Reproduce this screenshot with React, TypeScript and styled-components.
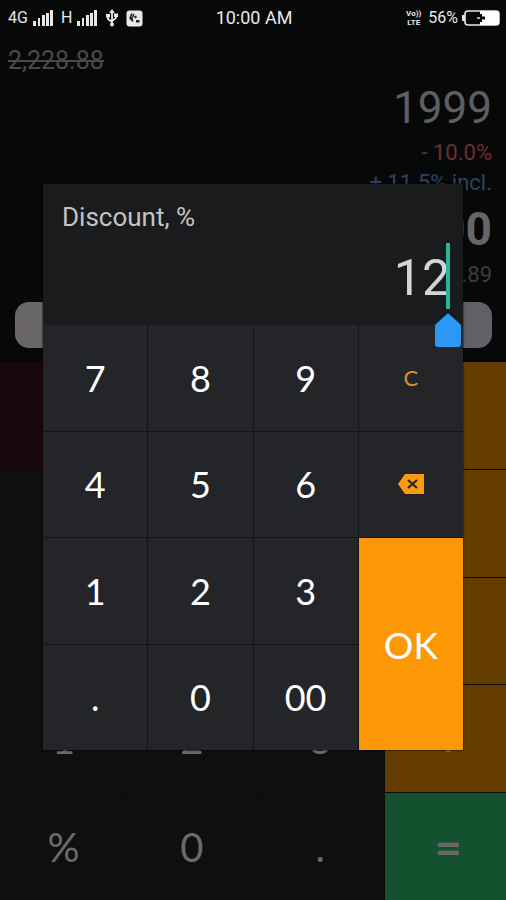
import React, { useState } from "react";
import styled, { createGlobalStyle, css } from "styled-components";

const GlobalStyle = createGlobalStyle`
  *, *::before, *::after { box-sizing: border-box; }
  body { margin: 0; background: #070909; }
  button { font: inherit; border: 0; padding: 0; margin: 0; cursor: pointer; }
`;

const Screen = styled.main`
  position: relative;
  display: flex;
  flex-direction: column;
  min-height: 100vh;
  overflow: hidden;
  background: #070909;
  color: #5e5e5e;
  font-family: Roboto, "Liberation Sans", sans-serif;
`;

const StatusBar = styled.header`
  display: grid;
  grid-template-columns: 1fr auto 1fr;
  align-items: center;
  height: 36px;
  padding: 0 6px 0 8px;
  color: #e8e8e8;
  font-size: 18px;
  line-height: 20px;
`;

const StatusGroup = styled.div<{ $end?: boolean }>`
  display: flex;
  align-items: center;
  justify-content: ${(p) => (p.$end ? "flex-end" : "flex-start")};
  gap: 7px;
  font-size: 16px;
  svg { display: block; flex: none; }
`;

const StatusPair = styled.span`
  display: flex;
  align-items: center;
  gap: 4px;
`;

const Display = styled.section`
  display: flex;
  flex-direction: column;
  align-items: flex-end;
  padding: 8px 14px 0 8px;
`;

const Previous = styled.s`
  align-self: flex-start;
  color: #484a4a;
  font-size: 25px;
  line-height: 34px;
`;

const Line = styled.div<{ $size: number; $height: number; $color: string; $bold?: boolean }>`
  color: ${(p) => p.$color};
  font-size: ${(p) => p.$size}px;
  line-height: ${(p) => p.$height}px;
  font-weight: ${(p) => (p.$bold ? 700 : 400)};
`;

const Banner = styled.div`
  height: 46px;
  margin: 12px 14px 14px 15px;
  border-radius: 14px;
  background: linear-gradient(90deg, #6a6766, #606167);
`;

const Pad = styled.div`
  flex: 1;
  display: grid;
  grid-template-columns: repeat(4, 1fr);
  grid-template-rows: repeat(5, 1fr);
  gap: 1px;
  margin-right: -6px;
  background: #0a0b0c;
  font-family: Lato, sans-serif;
  font-size: 40px;
`;

const tones = {
  plain: "#0e0f11",
  clear: "#19070b",
  operator: "#663d00",
  equals: "#14522f",
};

const PadKey = styled.button<{ $tone: keyof typeof tones }>`
  background: ${(p) => tones[p.$tone]};
  color: #6a6a6b;
  ${(p) => (p.$tone === "equals" || p.$tone === "operator") && css`
    font-size: 46px;
    line-height: 46px;
    font-weight: 700;
  `}
`;

const Overlay = styled.div`
  position: absolute;
  inset: 34px 0 0;
  display: flex;
  align-items: center;
  justify-content: center;
`;

const Dialog = styled.section`
  width: 83%;
  background: #1a1b1c;
  box-shadow: 0 0 2px #000;
`;

const Field = styled.div`
  display: flex;
  flex-direction: column;
  height: 141px;
  padding: 17px 13px 0 19px;
  color: #c4c4c5;
`;

const FieldLabel = styled.label`
  font-size: 26px;
  line-height: 32px;
`;

const Entry = styled.div`
  position: relative;
  margin-top: 10px;
`;

const EntryInput = styled.input`
  display: block;
  width: 100%;
  height: 70px;
  padding: 0;
  border: 0;
  outline: 0;
  background: transparent;
  color: #d4d4d4;
  font: 50px Roboto, sans-serif;
  text-align: right;
  caret-color: transparent;
`;

const Caret = styled.span`
  position: absolute;
  top: 0;
  right: 0;
  width: 4px;
  height: 66px;
  background: #20b99b;
`;

const Handle = styled.svg`
  position: absolute;
  top: 70px;
  right: -12px;
  z-index: 1;
`;

const Keys = styled.div`
  display: grid;
  grid-template-columns: repeat(4, 1fr);
  grid-template-rows: repeat(4, 1fr);
  gap: 1px;
  height: 425px;
  background: #131416;
  font-family: Lato, sans-serif;
`;

const Key = styled.button<{ $kind?: "small" | "ok" }>`
  display: grid;
  place-items: center;
  background: #242529;
  color: #fff;
  font-size: 36px;
  ${(p) => p.$kind === "small" && css`
    color: #d8902c;
    font-size: 22px;
  `}
  ${(p) => p.$kind === "ok" && css`
    grid-area: 3 / 4 / span 2 / auto;
    background: #fc9706;
    font-size: 37px;
  `}
`;

const Signal = () => (
  <svg width="22" height="18" viewBox="0 0 22 18" fill="#e8e8e8" aria-hidden="true">
    <path d="M1 12h3v5H1zM6 9h2v8H6zM10 6h3v11h-3zM14 4h3v13h-3zM18 1h3v16h-3z" />
  </svg>
);

const Usb = () => (
  <svg width="14" height="18" viewBox="-1 0 14 18" fill="none" stroke="#e8e8e8" strokeWidth="1.8" aria-hidden="true">
    <path d="M6 3v13M2 7v3l4 3M10 6v3l-4 3" />
    <path d="M6 0l2.800 4H3.200zM0 5h4v3.500H0zM8 4.500h4V8H8z" fill="#e8e8e8" stroke="none" />
    <circle cx="6" cy="15.500" r="2" fill="#e8e8e8" stroke="none" />
  </svg>
);

const AppBadge = () => (
  <svg width="17" height="17" viewBox="0 0 17 17" aria-hidden="true">
    <rect x="0.500" y="0.500" width="16" height="16" rx="3" fill="#e8e8e8" />
    <path d="M6 3.500L4 8l3 1.500M8 4l-2 4M4 8l3 3.500" fill="none" stroke="#222" strokeWidth="1.500" />
    <path d="M8 6.500l2-1 1 2-2 1zM10 10h3.500v2.500H10z" fill="#222" />
  </svg>
);

const VoLte = styled.span`
  display: grid;
  font-size: 8px;
  line-height: 9px;
  font-weight: 700;
  text-align: center;
`;

const Battery = () => (
  <svg width="38" height="16" viewBox="0 0 38 16" aria-hidden="true">
    <path d="M0 5h3v6H0z" fill="#e8e8e8" />
    <rect x="3" y="1" width="34" height="14" rx="3" fill="none" stroke="#e8e8e8" strokeWidth="1.600" />
    <path d="M18 1h16a3 3 0 0 1 3 3v8a3 3 0 0 1-3 3H18z" fill="#fff" />
    <path d="M18 4h2v2.500h3v3h-3V12h-2z" fill="#0a0a0a" />
    <path d="M15 8h3" stroke="#e8e8e8" strokeWidth="1.500" />
  </svg>
);

const Backspace = () => (
  <svg width="26" height="20" viewBox="0 0 26 20" aria-hidden="true">
    <path d="M7 0h19v20H7L0 10z" fill="#fc9a0c" />
    <path d="M10 6l9 8M19 6l-9 8" stroke="#242529" strokeWidth="2.200" />
  </svg>
);

const padKeys: [string, keyof typeof tones][] = [
  ["C", "clear"], ["±", "plain"], ["⌫", "plain"], ["÷", "operator"],
  ["7", "plain"], ["8", "plain"], ["9", "plain"], ["×", "operator"],
  ["4", "plain"], ["5", "plain"], ["6", "plain"], ["−", "operator"],
  ["1", "plain"], ["2", "plain"], ["3", "plain"], ["+", "operator"],
  ["%", "plain"], ["0", "plain"], [".", "plain"], ["=", "equals"],
];

const dialogKeys = ["7", "8", "9", "C", "4", "5", "6", "back", "1", "2", "3", "OK", ".", "0", "00"];

export default function App() {
  const [value, setValue] = useState("12");

  const press = (key: string) => {
    if (key === "C") setValue("");
    else if (key === "back") setValue((v) => v.slice(0, -1));
    else if (key !== "OK") setValue((v) => v + key);
  };

  return (
    <>
      <GlobalStyle />
      <Screen>
        <StatusBar>
          <StatusGroup>
            <StatusPair>4G <Signal /></StatusPair>
            <StatusPair>H <Signal /></StatusPair>
            <Usb />
            <AppBadge />
          </StatusGroup>
          <span>10:00 AM</span>
          <StatusGroup $end>
            <VoLte><span>Vo))</span><span>LTE</span></VoLte>
            <StatusPair>56% <Battery /></StatusPair>
          </StatusGroup>
        </StatusBar>
        <Display>
          <Previous>2,228.88</Previous>
          <Line $size={44} $height={60} $color="#5e5f5f">1999</Line>
          <Line $size={22} $height={30} $color="#6b2f33">- 10.0%</Line>
          <Line $size={22} $height={30} $color="#2c4364">+ 11.5% incl.</Line>
          <Line $size={46} $height={62} $color="#666" $bold>2,006.00</Line>
          <Line $size={22} $height={30} $color="#3c3d3d">206.89</Line>
        </Display>
        <Banner />
        <Pad>
          {padKeys.map(([label, tone]) => (
            <PadKey key={label} type="button" $tone={tone}>{label}</PadKey>
          ))}
        </Pad>
        <Overlay>
          <Dialog role="dialog" aria-labelledby="discount-label">
            <Field>
              <FieldLabel id="discount-label" htmlFor="discount">Discount, %</FieldLabel>
              <Entry>
                <EntryInput id="discount" inputMode="decimal" value={value} onChange={(e) => setValue(e.target.value)} />
                <Caret />
                <Handle width="28" height="34" viewBox="0 0 28 34" aria-hidden="true">
                  <path d="M13 1q1-1 2 0l11 10q1 1 1 2v18q0 3-3 3H4q-3 0-3-3V13q0-1 1-2z" fill="#2b98f7" />
                </Handle>
              </Entry>
            </Field>
            <Keys>
              {dialogKeys.map((key) => (
                <Key
                  key={key}
                  type="button"
                  aria-label={key === "back" ? "Backspace" : undefined}
                  $kind={key === "OK" ? "ok" : key === "C" ? "small" : undefined}
                  onClick={() => press(key)}
                >
                  {key === "back" ? <Backspace /> : key}
                </Key>
              ))}
            </Keys>
          </Dialog>
        </Overlay>
      </Screen>
    </>
  );
}
